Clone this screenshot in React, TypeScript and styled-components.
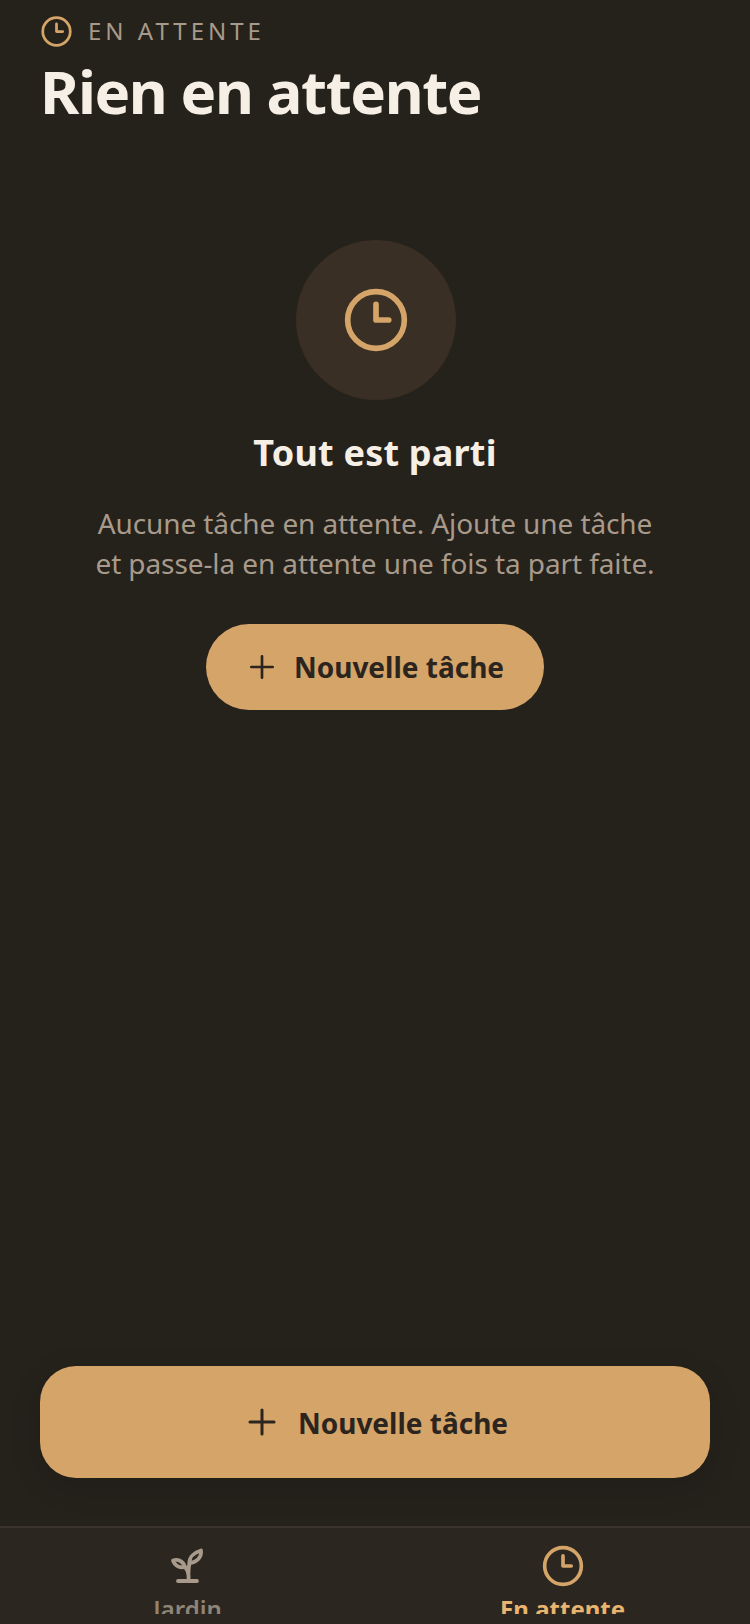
import React from "react";
import styled, { createGlobalStyle } from "styled-components";

const Global = createGlobalStyle`
  html, body { margin: 0; padding: 0; background: #25211b; }
  * { box-sizing: border-box; }
`;

const Page = styled.div`
  width: 750px;
  height: 1624px;
  display: flex;
  flex-direction: column;
  overflow: hidden;
  background: #25211b;
  font-family: "Noto Sans", sans-serif;
`;

const Header = styled.header`
  padding: 13px 40px 0;
  display: flex;
  flex-direction: column;
`;

const Eyebrow = styled.div`
  display: flex;
  align-items: center;
  gap: 15px;
  height: 36px;
  color: #a89a8a;
  font-size: 24px;
  line-height: 36px;
  letter-spacing: 4px;
`;

const Title = styled.h1`
  margin: 8px 0 0;
  color: #f5efe6;
  font-size: 60px;
  line-height: 68px;
  font-weight: 700;
  letter-spacing: -0.024em;
`;

const Empty = styled.main`
  flex: 1;
  display: flex;
  flex-direction: column;
  align-items: center;
  padding-top: 115px;
`;

const Halo = styled.div`
  width: 160px;
  height: 160px;
  margin-left: 2px;
  border-radius: 50%;
  background: #3a2f25;
  display: flex;
  align-items: center;
  justify-content: center;
`;

const EmptyTitle = styled.h2`
  margin: 29px 0 0;
  color: #f5efe6;
  font-size: 36px;
  line-height: 48px;
  font-weight: 700;
  letter-spacing: 0.2px;
`;

const EmptyText = styled.p`
  margin: 26px 0 0;
  color: #a89a8a;
  font-size: 28px;
  line-height: 40px;
  letter-spacing: -0.1px;
  text-align: center;
`;

const PillButton = styled.button`
  margin-top: 41px;
  width: 338px;
  height: 86px;
  border: 0;
  border-radius: 43px;
  background: #d4a468;
  color: #2c241e;
  display: flex;
  align-items: center;
  justify-content: center;
  gap: 16px;
  font-family: inherit;
  font-size: 28px;
  font-weight: 700;
  padding: 0;
`;

const Footer = styled.div`
  padding: 0 40px 48px;
`;

const WideButton = styled.button`
  width: 670px;
  height: 112px;
  border: 0;
  border-radius: 36px;
  background: #d4a468;
  color: #2c241e;
  display: flex;
  align-items: center;
  justify-content: center;
  gap: 18px;
  font-family: inherit;
  font-size: 28px;
  font-weight: 700;
  padding: 0 0 0 2px;
  box-shadow: 0 8px 32px rgba(0, 0, 0, 0.12);
`;

const WideLabel = styled.span`
  padding-top: 2px;
`;

const Nav = styled.nav`
  height: 98px;
  border-top: 2px solid #3a332b;
  background: #2b261f;
  display: grid;
  grid-template-columns: 1fr 1fr;
  padding: 0 0 10px;
`;

const Tab = styled.div`
  display: flex;
  flex-direction: column;
  align-items: center;
  overflow: hidden;
  padding-top: 16px;
`;

const TabIcon = styled.div`
  width: 44px;
  height: 44px;
  display: flex;
  align-items: center;
  justify-content: center;
  flex: none;
`;

const TabLabel = styled.span<{ $active?: boolean }>`
  margin-top: 5px;
  font-size: 24px;
  line-height: 32px;
  font-weight: ${(p) => (p.$active ? 700 : 600)};
  color: ${(p) => (p.$active ? "#e8b46e" : "#8f8478")};
  flex: none;
`;

const ClockIcon = ({ size }: { size: number }) => (
  <svg width={size} height={size} viewBox="0 0 24 24" fill="none" stroke="#d4a468" strokeWidth="2" strokeLinecap="round" strokeLinejoin="round">
    <circle cx="12" cy="12" r="10" />
    <path d="M12 6.500V12h4.500" />
  </svg>
);

const PlusIcon = ({ size }: { size: number }) => (
  <svg width={size} height={size} viewBox="0 0 24 24" fill="none" stroke="#2c241e" strokeWidth="2" strokeLinecap="round">
    <path d="M12 4v16M4 12h16" />
  </svg>
);

const SproutIcon = () => (
  <svg width="36" height="36" viewBox="0 0 36 36" fill="none" stroke="#a89a8a" strokeWidth="3.8" strokeLinecap="round" strokeLinejoin="round">
    <path d="M8 33h19" />
    <path d="M18.500 32c.5-4-.5-9.500-3.500-13" />
    <path d="M18.500 25c0-3.500.2-6.500 1-10" />
    <path d="M3 12.500c4.500-1.500 10 0 12 6.500-5 1-10-1-12-6.500Z" />
    <path d="M19.500 15c-.5-6 5-10.500 11.500-12.500.8 6.500-4 12-11.500 12.500Z" />
  </svg>
);

export default function App() {
  return (
    <Page>
      <Global />
      <Header>
        <Eyebrow>
          <ClockIcon size={33} />
          <span>EN ATTENTE</span>
        </Eyebrow>
        <Title>Rien en attente</Title>
      </Header>
      <Empty>
        <Halo>
          <ClockIcon size={68} />
        </Halo>
        <EmptyTitle>Tout est parti</EmptyTitle>
        <EmptyText>
          Aucune tâche en attente. Ajoute une tâche
          <br />
          et passe-la en attente une fois ta part faite.
        </EmptyText>
        <PillButton>
          <PlusIcon size={32} />
          Nouvelle tâche
        </PillButton>
      </Empty>
      <Footer>
        <WideButton>
          <PlusIcon size={36} />
          <WideLabel>Nouvelle tâche</WideLabel>
        </WideButton>
      </Footer>
      <Nav>
        <Tab>
          <TabIcon>
            <SproutIcon />
          </TabIcon>
          <TabLabel>Jardin</TabLabel>
        </Tab>
        <Tab>
          <TabIcon>
            <ClockIcon size={44} />
          </TabIcon>
          <TabLabel $active>En attente</TabLabel>
        </Tab>
      </Nav>
    </Page>
  );
}
